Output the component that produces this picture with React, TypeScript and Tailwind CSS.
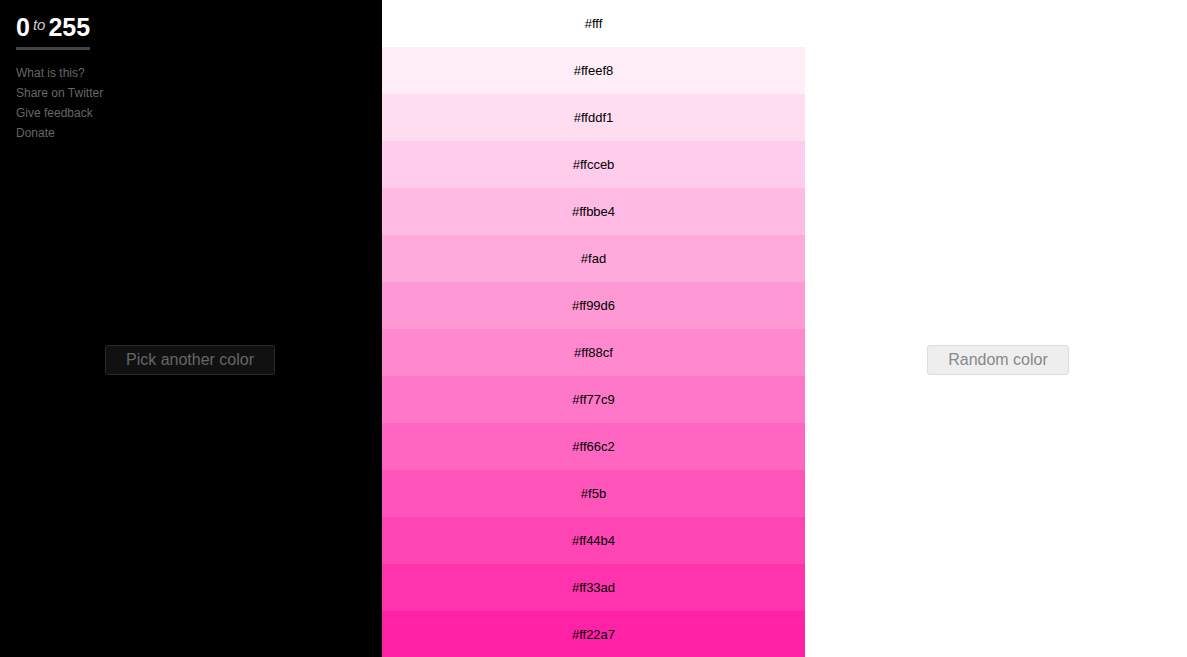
import React from "react";

const colors = [
  "#fff", "#ffeef8", "#ffddf1", "#ffcceb", "#ffbbe4", "#fad", "#ff99d6", "#ff88cf",
  "#ff77c9", "#ff66c2", "#f5b", "#ff44b4", "#ff33ad", "#ff22a7",
];

export default function App() {
  return (
    <div className="flex h-[657px] w-full overflow-hidden bg-white" style={{ fontFamily: '"Liberation Sans", Arial, sans-serif' }}>
      <div className="relative flex w-[382px] shrink-0 justify-center bg-black pt-[345px]">
        <div className="absolute left-4 top-[11px]">
          <div className="inline-flex items-baseline border-b-[3px] border-[#444] text-white leading-[32px]">
            <span className="text-[25px] font-bold">0</span>
            <span className="mx-[3px] text-[15px] italic text-[#ccc]" style={{ position: "relative", top: "-6px" }}>to</span>
            <span className="text-[25px] font-bold">255</span>
          </div>
          <ul className="mt-[13px] text-[12px] leading-[20px] text-[#666]">
            <li>What is this?</li>
            <li>Share on Twitter</li>
            <li>Give feedback</li>
            <li>Donate</li>
          </ul>
        </div>
        <button className="ml-[-2px] h-[30px] w-[170px] rounded-[3px] border border-[#2a2a2a] bg-[#111] text-[16px] text-[#666]">
          Pick another color
        </button>
      </div>
      <div className="flex w-[423px] shrink-0 flex-col">
        {colors.map((c) => (
          <div key={c} className="flex h-[47px] shrink-0 items-center justify-center text-[13px] text-black" style={{ backgroundColor: c }}>
            {c}
          </div>
        ))}
      </div>
      <div className="flex flex-1 justify-center bg-white pt-[345px]">
        <button className="ml-[4px] h-[30px] w-[142px] rounded-[3px] border border-[#ddd] bg-[#eee] text-[16px] text-[#888]">
          Random color
        </button>
      </div>
    </div>
  );
}
